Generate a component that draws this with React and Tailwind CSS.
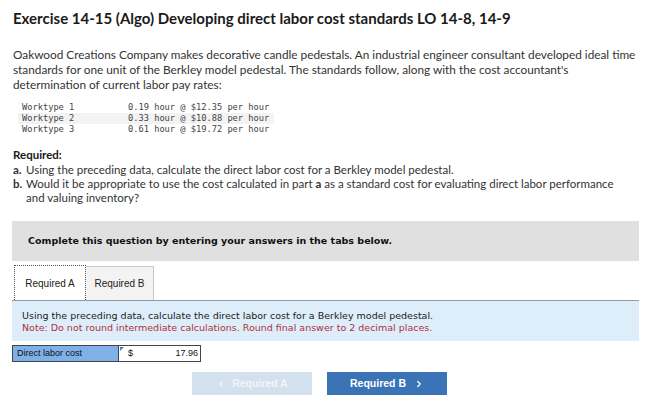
import { ChevronLeft, ChevronRight } from "lucide-react";

export default function App() {
    const rows = [
        ["Worktype 1", "0.19 hour @ $12.35 per hour"],
        ["Worktype 2", "0.33 hour @ $10.88 per hour"],
        ["Worktype 3", "0.61 hour @ $19.72 per hour"],
    ];

    return (
        <div className="w-[659px] h-[405px] bg-white text-[#222] overflow-hidden" style={{ fontFamily: "Lato, 'Open Sans', sans-serif" }}>
            <div className="px-[13px] pt-[9px]">
                <h1 className="text-[15px] font-bold text-[#1a1a1a] leading-[18px]">
                    Exercise 14-15 (Algo) Developing direct labor cost standards LO 14-8, 14-9
                </h1>

                <p className="mt-[20px] text-[11.8px] leading-[15px] text-[#333] pr-[4px]">
                    Oakwood Creations Company makes decorative candle pedestals. An industrial engineer consultant developed ideal time standards for one unit of the Berkley model pedestal. The standards follow, along with the cost accountant's determination of current labor pay rates:
                </p>

                <div className="mt-[10px] ml-[5px] w-[256px] text-[8.7px] leading-[11px] text-[#444] whitespace-nowrap font-['DejaVu_Sans_Mono',monospace]">
                    {rows.map((r, i) => (
                        <div key={i} className={"flex pl-[4px] " + (i === 1 ? "bg-[#f3f3f3]" : "")}>
                            <span className="w-[106px]">{r[0]}</span>
                            <span>{r[1]}</span>
                        </div>
                    ))}
                </div>

                <div className="mt-[13px] text-[11.5px] leading-[14px] text-[#333] pr-[20px]">
                    <div className="font-bold text-[#1a1a1a]">Required:</div>
                    <div className="mt-[1px] flex">
                        <b className="w-[13px] shrink-0">a.</b>
                        <span>Using the preceding data, calculate the direct labor cost for a Berkley model pedestal.</span>
                    </div>
                    <div className="flex">
                        <b className="w-[13px] shrink-0">b.</b>
                        <span>Would it be appropriate to use the cost calculated in part <b>a</b> as a standard cost for evaluating direct labor performance and valuing inventory?</span>
                    </div>
                </div>
            </div>

            <div className="mx-[12px] mt-[16px] w-[627px]">
                <div className="h-[40px] bg-[#e0e0e0] flex items-center pl-[16px] text-[9.5px] font-bold text-[#111] font-['DejaVu_Sans',sans-serif]">
                    Complete this question by entering your answers in the tabs below.
                </div>

                <div className="mt-[5px] pl-[2px] flex border-b border-[#8f9ca3] h-[35px] items-end text-[10px] text-[#222] font-['Liberation_Sans',sans-serif]">
                    <div className="h-[35px] w-[72px] bg-white border border-dotted border-[#555] border-b-0 flex items-center justify-center">Required A</div>
                    <div className="h-[34px] w-[68px] bg-[#f3f3f3] border border-[#c8c8c8] border-l-0 border-b-0 flex items-center justify-center">Required B</div>
                </div>

                <div className="h-[40px] bg-[#ddeefa] pl-[10px] pt-[9px] text-[9.5px] leading-[12px] font-['DejaVu_Sans',sans-serif]">
                    <div className="text-[#222]">Using the preceding data, calculate the direct labor cost for a Berkley model pedestal.</div>
                    <div className="text-[#b0303a]">Note: Do not round intermediate calculations. Round final answer to 2 decimal places.</div>
                </div>

                <div className="mt-[4px] flex h-[17px] text-[9px] font-['Liberation_Sans',sans-serif]">
                    <div className="w-[107px] bg-[#7fb0e8] border border-[#444] flex items-center pl-[4px] text-[#111]">Direct labor cost</div>
                    <div className="relative w-[82px] border border-l-0 border-[#444] bg-white flex items-center justify-between pl-[9px] pr-[2px] text-[#111]">
                        <span className="absolute left-[1px] top-[1px] w-0 h-0 border-t-[4px] border-r-[4px] border-t-[#4a7fc0] border-r-transparent" />
                        <span>$</span>
                        <span>17.96</span>
                    </div>
                </div>

                <div className="mt-[10px] flex gap-[15px] pl-[180px] text-[10.5px] font-bold font-['Liberation_Sans',sans-serif]">
                    <button className="w-[120px] h-[23px] bg-[#d3e1ee] text-[#f0f5fa] flex items-center justify-center gap-[6px]">
                        <ChevronLeft size={10} strokeWidth={3} />
                        <span>Required A</span>
                    </button>
                    <button className="w-[120px] h-[23px] bg-[#3b73b7] text-white flex items-center justify-center gap-[8px]">
                        <span>Required B</span>
                        <ChevronRight size={10} strokeWidth={3} />
                    </button>
                </div>
            </div>
        </div>
    );
}
